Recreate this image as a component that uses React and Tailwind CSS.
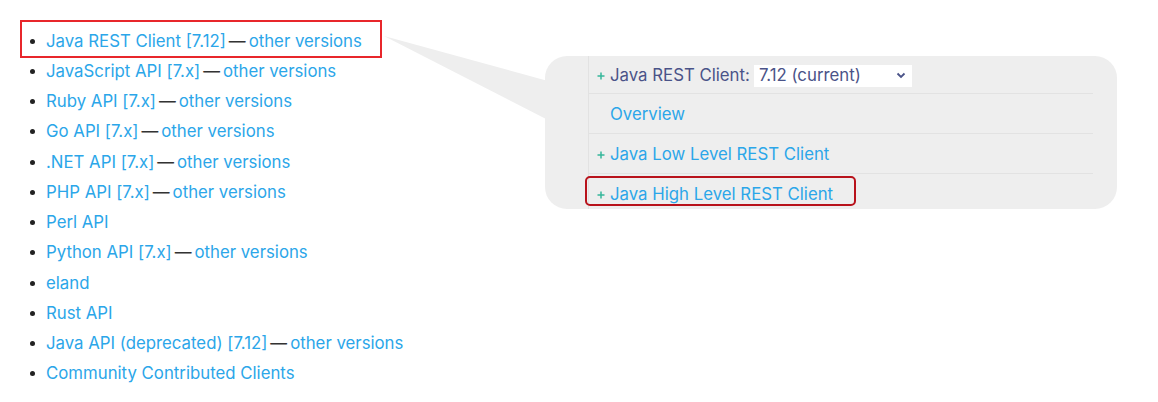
import React from 'react';

const clients = [
    { name: 'Java REST Client [7.12]', other: true },
    { name: 'JavaScript API [7.x]', other: true },
    { name: 'Ruby API [7.x]', other: true },
    { name: 'Go API [7.x]', other: true },
    { name: '.NET API [7.x]', other: true },
    { name: 'PHP API [7.x]', other: true },
    { name: 'Perl API' },
    { name: 'Python API [7.x]', other: true },
    { name: 'eland' },
    { name: 'Rust API' },
    { name: 'Java API (deprecated) [7.12]', other: true },
    { name: 'Community Contributed Clients' },
];

const tocRows = [
    { label: 'Overview', plus: false },
    { label: 'Java Low Level REST Client', plus: true },
    { label: 'Java High Level REST Client', plus: true },
];

const Plus = () => (
    <span className="w-[13px] flex items-center">
        <svg width="8" height="8" viewBox="0 0 8 8">
            <path d="M4 0.5 V7.5 M0.5 4 H7.5" stroke="#36b79b" strokeWidth="1.5" />
        </svg>
    </span>
);

const App = () => {
    return (
        <div className="relative w-[1158px] h-[402px] bg-white overflow-hidden font-['Inter',sans-serif] text-[16.8px]">
            {/* callout pointer */}
            <svg className="absolute left-0 top-0" width="1158" height="402">
                <polygon points="384,36 548,81 548,120" fill="#eeeeee" />
            </svg>

            {/* highlight around the first item */}
            <div className="absolute left-[20px] top-[20px] w-[362px] h-[38px] border-2 border-[#e8262b]" />

            <ul className="relative pt-[26px] pl-[30px]">
                {clients.map((c) => (
                    <li key={c.name} className="flex items-center h-[30.25px]">
                        <span className="w-[5px] h-[5px] rounded-full bg-[#222]" />
                        <span className="ml-[11px] text-[#2ba6e9]">{c.name}</span>
                        {c.other && (
                            <>
                                <span className="mx-[3px] text-[#333]">—</span>
                                <span className="text-[#2ba6e9]">other versions</span>
                            </>
                        )}
                    </li>
                ))}
            </ul>

            {/* zoomed toc panel */}
            <div className="absolute left-[545px] top-[56px] w-[572px] h-[153px] rounded-[22px] bg-[#eeeeee] pl-[43px] pr-[24px]">
                <div className="relative h-full border-l border-[#e2e2e2]">
                    <div className="flex items-center h-[38px] pt-[2px] border-b border-[#e2e2e2] pl-[8px]">
                        <Plus />
                        <span className="text-[#4a5388]">Java REST Client:</span>
                        <div className="ml-[4px] w-[158px] h-[22px] bg-white flex items-center justify-between pl-[5px] pr-[6px] text-[#4a5388]">
                            <span>7.12 (current)</span>
                            <svg width="10" height="7" viewBox="0 0 10 7">
                                <path d="M1.5 1.5 L5 5 L8.5 1.5" fill="none" stroke="#4a5388" strokeWidth="1.8" />
                            </svg>
                        </div>
                    </div>
                    {tocRows.map((r, i) => (
                        <div
                            key={r.label}
                            className={`flex items-center h-[40px] pt-[2px] pl-[8px] ${i < tocRows.length - 1 ? 'border-b border-[#e2e2e2]' : ''}`}
                        >
                            {r.plus ? <Plus /> : <span className="w-[13px]" />}
                            <span className="text-[#2ba6e9]">{r.label}</span>
                        </div>
                    ))}
                    <div className="absolute left-[-4px] top-[120px] w-[271px] h-[30px] rounded-[5px] border-2 border-[#b8121b]" />
                </div>
            </div>
        </div>
    );
};

export default App;
